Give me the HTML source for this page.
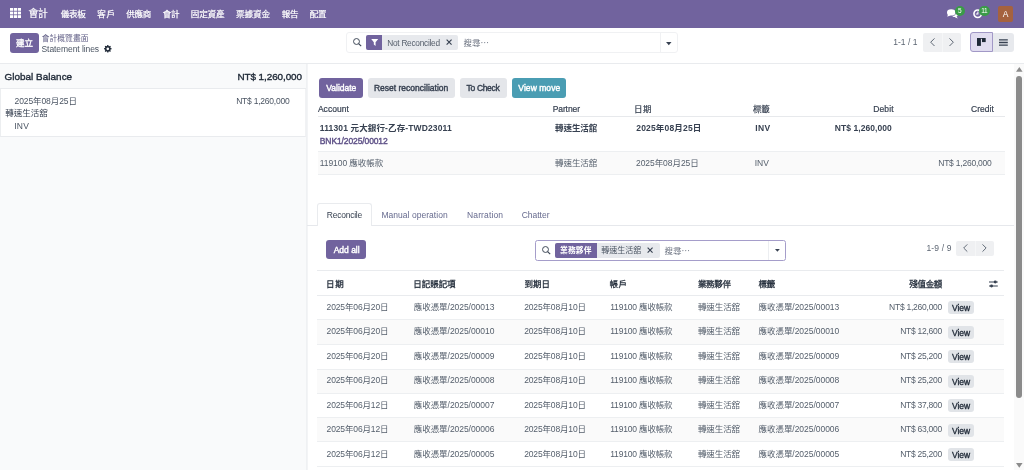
<!DOCTYPE html>
<html lang="zh-Hant">
<head>
<meta charset="utf-8">
<title>會計</title>
<style>
*{box-sizing:border-box;margin:0;padding:0}
html,body{width:1024px;height:470px;overflow:hidden;background:#fff}
body{font-family:"Liberation Sans","Noto Sans CJK TC",sans-serif;font-size:8.5px;color:#374151;position:relative}
.abs{position:absolute;white-space:nowrap}
.t{position:absolute;white-space:nowrap;line-height:12px}
.e{font-family:"Noto Sans CJK TC",sans-serif}
svg{position:absolute;overflow:visible}
#app{position:absolute;left:0;top:0;width:1024px;height:470px;overflow:hidden;will-change:transform}
</style>
</head>
<body>
<div id="app">
<div class="abs" style="left:0px;top:0px;width:1024px;height:27.5px;background:#71639e;"></div>
<svg style="left:10px;top:8px" width="11" height="10" viewBox="0 0 11 10"><g fill="#fff"><rect x="0" y="0" width="3.2" height="2.8"/><rect x="3.9" y="0" width="3.2" height="2.8"/><rect x="7.8" y="0" width="3.2" height="2.8"/><rect x="0" y="3.6" width="3.2" height="2.8"/><rect x="3.9" y="3.6" width="3.2" height="2.8"/><rect x="7.8" y="3.6" width="3.2" height="2.8"/><rect x="0" y="7.2" width="3.2" height="2.8"/><rect x="3.9" y="7.2" width="3.2" height="2.8"/><rect x="7.8" y="7.2" width="3.2" height="2.8"/></g></svg>
<div class="t" style="left:28.5px;top:8.4px;font-size:9.8px;color:#fff;letter-spacing:-0.25px;-webkit-text-stroke:0.2px #fff;">會計</div>
<div class="t" style="left:60.75px;top:8px;font-size:8.5px;color:#fff;letter-spacing:-0.25px;-webkit-text-stroke:0.22px #fff;">儀表板</div>
<div class="t" style="left:97.25px;top:8px;font-size:8.5px;color:#fff;letter-spacing:0.75px;-webkit-text-stroke:0.22px #fff;">客戶</div>
<div class="t" style="left:126.25px;top:8px;font-size:8.5px;color:#fff;letter-spacing:-0.25px;-webkit-text-stroke:0.22px #fff;">供應商</div>
<div class="t" style="left:162.75px;top:8px;font-size:8.5px;color:#fff;letter-spacing:-0.25px;-webkit-text-stroke:0.22px #fff;">會計</div>
<div class="t" style="left:190.75px;top:8px;font-size:8.5px;color:#fff;letter-spacing:-0.083px;-webkit-text-stroke:0.22px #fff;">固定資產</div>
<div class="t" style="left:236px;top:8px;font-size:8.5px;color:#fff;-webkit-text-stroke:0.22px #fff;">票據資金</div>
<div class="t" style="left:281.75px;top:8px;font-size:8.5px;color:#fff;letter-spacing:-0.25px;-webkit-text-stroke:0.22px #fff;">報告</div>
<div class="t" style="left:309.75px;top:8px;font-size:8.5px;color:#fff;letter-spacing:-0.25px;-webkit-text-stroke:0.22px #fff;">配置</div>
<svg style="left:947px;top:8.5px" width="11" height="10" viewBox="0 0 11 10"><g fill="#fff"><ellipse cx="4.2" cy="3.4" rx="4.2" ry="3.2"/><path d="M1 5 L0.3 7.8 L3.6 6.2 Z"/><path d="M5.2 7.4 C7.4 8.6 9.8 8 10.6 6.4 C11.2 5 10.6 3.8 9.2 3 C9.2 5.6 7.6 7 5.2 7.4 Z"/><path d="M9.4 7.2 L10.8 9.4 L7.8 8.2 Z"/></g></svg>
<div class="abs" style="left:954.6px;top:5.5px;width:10.2px;height:10.2px;border-radius:5.1px;background:#3a9b47;color:#fff;font-size:6.5px;line-height:10.6px;text-align:center">5</div>
<svg style="left:973px;top:8.6px" width="9.4" height="9.4" viewBox="0 0 10 10"><circle cx="5" cy="5" r="4" fill="none" stroke="#fff" stroke-width="1.7"/><path d="M5.2 2.6 V5.4 H3" fill="none" stroke="#fff" stroke-width="1.1"/></svg>
<div class="abs" style="left:978.8px;top:5.5px;width:11px;height:10.2px;border-radius:5.1px;background:#3a9b47;color:#fff;font-size:6.5px;line-height:10.6px;text-align:center;letter-spacing:-0.3px">11</div>
<div class="abs" style="left:998px;top:6px;width:15.2px;height:16px;border-radius:2px;background:#a5623f;color:#fff;font-size:8.5px;line-height:16.5px;text-align:center">A</div>
<div class="abs" style="left:0px;top:63px;width:1024px;height:1px;background:#e9ebee;"></div>
<div class="abs" style="left:9.5px;top:33px;width:29.8px;height:19.8px;background:#71639e;border-radius:3px;"></div>
<div class="t" style="left:15.9px;top:37.4px;font-size:8.5px;color:#fff;-webkit-text-stroke:0.35px #fff;">建立</div>
<div class="t" style="left:41.75px;top:32.6px;font-size:7.7px;color:#5f5d84;letter-spacing:0.1px;">會計概覽畫面</div>
<div class="t" style="left:41.5px;top:42.5px;font-size:8.5px;color:#4b5563;letter-spacing:-0.071px;">Statement lines</div>
<svg style="left:103.5px;top:44.6px" width="7.6" height="7.6" viewBox="0 0 16 16"><path fill="#1f2937" d="M16 9.2V6.8l-2.1-.4c-.1-.5-.3-.9-.6-1.4l1.2-1.8-1.7-1.7-1.8 1.2c-.4-.2-.9-.4-1.4-.6L9.2 0H6.8l-.4 2.1c-.5.1-.9.3-1.4.6L3.2 1.5 1.5 3.2l1.2 1.8c-.2.4-.4.9-.6 1.4L0 6.8v2.4l2.1.4c.1.5.3.9.6 1.4l-1.2 1.8 1.7 1.7 1.8-1.2c.4.2.9.4 1.4.6l.4 2.1h2.4l.4-2.1c.5-.1.9-.3 1.4-.6l1.8 1.2 1.7-1.7-1.2-1.8c.2-.4.4-.9.6-1.4L16 9.2zM8 10.8A2.8 2.8 0 1 1 8 5.2a2.8 2.8 0 0 1 0 5.6z"/></svg>
<div class="abs" style="left:346px;top:32px;width:331.6px;height:21.3px;border:1px solid #f0f1f3;border-radius:3px;background:#fff"></div>
<div class="abs" style="left:660px;top:33px;width:1px;height:19.5px;background:#f0f1f3;"></div>
<svg style="left:353px;top:38.3px" width="8.5" height="8.5" viewBox="0 0 8.5 8.5"><circle cx="3.5" cy="3.5" r="2.95" fill="none" stroke="#374151" stroke-width="0.95"/><path d="M5.6 5.6 L8.2 8.2" stroke="#374151" stroke-width="1.1"/></svg>
<div class="abs" style="left:366.3px;top:35.3px;width:91.5px;height:14.4px;background:#e7e9ed;border-radius:2px;"></div>
<div class="abs" style="left:366.3px;top:35.3px;width:16px;height:14.4px;background:#71639e;border-radius:2px 0 0 2px;"></div>
<svg style="left:370.6px;top:39px" width="7.4" height="7" viewBox="0 0 8 8"><path d="M0 0 H8 L5 3.6 V8 L3 6.4 V3.6 Z" fill="#fff"/></svg>
<div class="t" style="left:387.25px;top:36.6px;font-size:8.3px;color:#555e6b;letter-spacing:-0.269px;">Not Reconciled</div>
<svg style="left:446.3px;top:39.3px" width="6.2" height="6.2" viewBox="0 0 7 7"><path d="M0.7 0.7 L6.3 6.3 M6.3 0.7 L0.7 6.3" stroke="#374151" stroke-width="1.3"/></svg>
<div class="t" style="left:463.55px;top:36.4px;font-size:8.5px;color:#6b7280;">搜尋<span class="e">…</span></div>
<svg style="left:666px;top:41.7px" width="5.6" height="3.2" viewBox="0 0 6 3.5"><path d="M0 0 H6 L3 3.5 Z" fill="#374151"/></svg>
<div class="t" style="left:893.2px;top:36.4px;font-size:8.5px;color:#5d6673;letter-spacing:0.025px;">1-1 / 1</div>
<div class="abs" style="left:923px;top:32.8px;width:38px;height:18.8px;background:#eff0f2;border-radius:2px;"></div>
<div class="abs" style="left:941.7px;top:32.8px;width:0.6px;height:18.8px;background:#f5f6f7;"></div>
<svg style="left:929.5px;top:38px" width="5" height="8.4" viewBox="0 0 5 8.4"><path d="M4.5 0.4 L0.7 4.2 L4.5 8" fill="none" stroke="#4b5563" stroke-width="0.9"/></svg>
<svg style="left:949px;top:38px" width="5" height="8.4" viewBox="0 0 5 8.4"><path d="M0.5 0.4 L4.3 4.2 L0.5 8" fill="none" stroke="#4b5563" stroke-width="0.9"/></svg>
<div class="abs" style="left:992px;top:33px;width:22px;height:18.6px;background:#e7e9ed;border-radius:0 3px 3px 0;"></div>
<div class="abs" style="left:970.2px;top:32.2px;width:22.8px;height:20.2px;border-radius:3px 0 0 3px;background:#e1ddf0;border:1px solid #a198c6"></div>
<svg style="left:977.4px;top:38.3px" width="8.7" height="7.9" viewBox="0 0 8.7 7.9"><rect x="0" y="0" width="3.9" height="7.9" fill="#1f2937"/><rect x="3.9" y="0" width="1.1" height="0.8" fill="#1f2937"/><rect x="5" y="0" width="3.7" height="4.1" fill="#1f2937"/></svg>
<svg style="left:999.2px;top:39px" width="8.8" height="7" viewBox="0 0 9 7"><path d="M0 0.8 H9 M0 3.5 H9 M0 6.2 H9" stroke="#374151" stroke-width="1.4"/></svg>
<div class="abs" style="left:0px;top:64px;width:306px;height:406px;background:#f9fafb;"></div>
<div class="abs" style="left:306px;top:64px;width:1px;height:406px;background:#eff1f3;"></div>
<div class="abs" style="left:307px;top:64px;width:1px;height:406px;background:#f3f4f6;"></div>
<div class="abs" style="left:0px;top:88px;width:306px;height:1px;background:#e9ebee;"></div>
<div class="abs" style="left:0px;top:89px;width:305.6px;height:47.6px;background:#fff;border-bottom:1px solid #e9ebee;border-right:1px solid #f1f2f4;border-left:1px solid #eceef0;"></div>
<div class="t" style="left:4.45px;top:70.9px;font-size:9.9px;color:#1f2937;letter-spacing:0.054px;-webkit-text-stroke:0.38px #1f2937;">Global Balance</div>
<div class="t" style="left:237.5px;top:70.9px;font-size:9.9px;color:#1f2937;letter-spacing:-0.071px;-webkit-text-stroke:0.38px #1f2937;">NT$ 1,260,000</div>
<div class="t" style="left:14.5px;top:94.6px;font-size:8.5px;color:#4b5563;letter-spacing:-0.09px;">2025年08月25日</div>
<div class="t" style="left:236.15px;top:94.6px;font-size:8.5px;color:#4b5563;letter-spacing:-0.229px;">NT$ 1,260,000</div>
<div class="t" style="left:5.35px;top:107.4px;font-size:8.5px;color:#374151;letter-spacing:-0.025px;">轉速生活舘</div>
<div class="t" style="left:14.25px;top:119.6px;font-size:8.5px;color:#4b5563;letter-spacing:0.25px;">INV</div>
<div class="abs" style="left:319.4px;top:78px;width:43.3px;height:19.6px;background:#71639e;border-radius:3px;"></div>
<div class="t" style="left:326.25px;top:82.3px;font-size:8.5px;color:#fff;-webkit-text-stroke:0.4px #fff;">Validate</div>
<div class="abs" style="left:367.8px;top:78px;width:86.9px;height:19.6px;background:#e4e6ea;border-radius:3px;"></div>
<div class="t" style="left:373.9px;top:82.3px;font-size:8.5px;color:#374151;letter-spacing:0.011px;-webkit-text-stroke:0.4px #374151;">Reset reconciliation</div>
<div class="abs" style="left:460px;top:78px;width:46.5px;height:19.6px;background:#e4e6ea;border-radius:3px;"></div>
<div class="t" style="left:466.6px;top:82.3px;font-size:8.5px;color:#374151;letter-spacing:-0.336px;-webkit-text-stroke:0.4px #374151;">To Check</div>
<div class="abs" style="left:511.5px;top:78px;width:54.5px;height:19.6px;background:#4a9db3;border-radius:3px;"></div>
<div class="t" style="left:518.35px;top:82.3px;font-size:8.5px;color:#fff;letter-spacing:0.05px;-webkit-text-stroke:0.4px #fff;">View move</div>
<div class="t" style="left:317.9px;top:103px;font-size:8.5px;color:#374151;letter-spacing:0.042px;-webkit-text-stroke:0.2px #374151;">Account</div>
<div class="t" style="left:552.7px;top:103px;font-size:8.5px;color:#374151;letter-spacing:-0.1px;-webkit-text-stroke:0.2px #374151;">Partner</div>
<div class="t" style="left:633.95px;top:103px;font-size:8.5px;color:#374151;letter-spacing:0.55px;-webkit-text-stroke:0.2px #374151;">日期</div>
<div class="t" style="left:753.05px;top:103px;font-size:8.5px;color:#374151;letter-spacing:-0.2px;-webkit-text-stroke:0.2px #374151;">標籤</div>
<div class="t" style="left:873.2px;top:103px;font-size:8.5px;color:#374151;letter-spacing:0.125px;-webkit-text-stroke:0.2px #374151;">Debit</div>
<div class="t" style="left:970.95px;top:103px;font-size:8.5px;color:#374151;letter-spacing:0.06px;-webkit-text-stroke:0.2px #374151;">Credit</div>
<div class="abs" style="left:317.5px;top:116px;width:687px;height:1px;background:#e7e9ec;"></div>
<div class="t" style="left:319.8px;top:122.2px;font-size:8.5px;color:#374151;font-weight:bold;letter-spacing:0.134px;">111301 元大銀行-乙存-TWD23011</div>
<div class="t" style="left:319.8px;top:134.5px;font-size:8.5px;color:#5f5288;letter-spacing:-0.111px;-webkit-text-stroke:0.4px #5f5288;">BNK1/2025/00012</div>
<div class="t" style="left:554.95px;top:122.2px;font-size:8.5px;color:#374151;font-weight:bold;letter-spacing:-0.025px;">轉速生活舘</div>
<div class="t" style="left:636.25px;top:122.2px;font-size:8.5px;color:#374151;font-weight:bold;letter-spacing:0.175px;">2025年08月25日</div>
<div class="t" style="left:755.3px;top:122.2px;font-size:8.5px;color:#374151;font-weight:bold;letter-spacing:0.35px;">INV</div>
<div class="t" style="left:834.8px;top:122.2px;font-size:8.5px;color:#374151;font-weight:bold;letter-spacing:0.058px;">NT$ 1,260,000</div>
<div class="abs" style="left:317.5px;top:151px;width:687px;height:1px;background:#edeff1;"></div>
<div class="abs" style="left:317.5px;top:152px;width:687px;height:22px;background:#fafafa;"></div>
<div class="t" style="left:319.8px;top:157px;font-size:8.5px;color:#56606d;letter-spacing:-0.075px;">119100 應收帳款</div>
<div class="t" style="left:554.95px;top:157px;font-size:8.5px;color:#56606d;letter-spacing:-0.025px;">轉速生活舘</div>
<div class="t" style="left:636px;top:157px;font-size:8.5px;color:#56606d;letter-spacing:-0.06px;">2025年08月25日</div>
<div class="t" style="left:754.75px;top:157px;font-size:8.5px;color:#56606d;letter-spacing:-0.025px;">INV</div>
<div class="t" style="left:938.25px;top:157px;font-size:8.5px;color:#56606d;letter-spacing:-0.229px;">NT$ 1,260,000</div>
<div class="abs" style="left:317.5px;top:174px;width:687px;height:1px;background:#edeff1;"></div>
<div class="abs" style="left:307px;top:225px;width:707px;height:1px;background:#e6e8ec;"></div>
<div class="abs" style="left:317.2px;top:202.5px;width:55.3px;height:23.5px;border:1px solid #e9ebee;border-bottom:none;border-radius:3px 3px 0 0;background:#fff"></div>
<div class="t" style="left:326.75px;top:208.7px;font-size:8.5px;color:#374151;letter-spacing:-0.231px;">Reconcile</div>
<div class="t" style="left:381.45px;top:208.7px;font-size:8.5px;color:#666a8e;letter-spacing:0.033px;">Manual operation</div>
<div class="t" style="left:467.05px;top:208.7px;font-size:8.5px;color:#666a8e;letter-spacing:0.119px;">Narration</div>
<div class="t" style="left:521.7px;top:208.7px;font-size:8.5px;color:#666a8e;letter-spacing:-0.008px;">Chatter</div>
<div class="abs" style="left:326.2px;top:240px;width:40px;height:19.4px;background:#71639e;border-radius:3px;"></div>
<div class="t" style="left:333.65px;top:244.2px;font-size:8.5px;color:#fff;-webkit-text-stroke:0.4px #fff;">Add all</div>
<div class="abs" style="left:535px;top:240.3px;width:251px;height:20.3px;border:1px solid #a59dca;border-radius:2.5px;background:#fff"></div>
<div class="abs" style="left:768.4px;top:241.3px;width:1px;height:18.3px;background:#eceef1;"></div>
<svg style="left:541.7px;top:246.1px" width="8.5" height="8.5" viewBox="0 0 8.5 8.5"><circle cx="3.5" cy="3.5" r="2.95" fill="none" stroke="#374151" stroke-width="0.95"/><path d="M5.6 5.6 L8.2 8.2" stroke="#374151" stroke-width="1.1"/></svg>
<div class="abs" style="left:554.7px;top:243.2px;width:105px;height:14.6px;background:#e7e9ed;border-radius:2px;"></div>
<div class="abs" style="left:554.7px;top:243.2px;width:42.2px;height:14.6px;background:#71639e;border-radius:2px 0 0 2px;"></div>
<div class="t" style="left:560.1px;top:244.6px;font-size:7.8px;color:#fff;font-weight:bold;letter-spacing:0.05px;">業務夥伴</div>
<div class="t" style="left:601.35px;top:244.8px;font-size:8px;color:#4b5563;letter-spacing:-0.025px;">轉速生活舘</div>
<svg style="left:647.2px;top:247.2px" width="6.2" height="6.2" viewBox="0 0 7 7"><path d="M0.7 0.7 L6.3 6.3 M6.3 0.7 L0.7 6.3" stroke="#374151" stroke-width="1.3"/></svg>
<div class="t" style="left:664.45px;top:244.3px;font-size:8.5px;color:#6b7280;">搜尋<span class="e">…</span></div>
<svg style="left:774.8px;top:249.4px" width="4.8" height="2.9" viewBox="0 0 6 3.5"><path d="M0 0 H6 L3 3.5 Z" fill="#374151"/></svg>
<div class="t" style="left:926.4px;top:242.1px;font-size:8.5px;color:#5d6673;letter-spacing:0.175px;">1-9 / 9</div>
<div class="abs" style="left:956px;top:240.6px;width:38.2px;height:15px;background:#eff0f2;border-radius:2px;"></div>
<div class="abs" style="left:974.8px;top:240.6px;width:0.6px;height:15px;background:#f5f6f7;"></div>
<svg style="left:963.2px;top:244px" width="4.8" height="8" viewBox="0 0 5 8.4"><path d="M4.5 0.4 L0.7 4.2 L4.5 8" fill="none" stroke="#4b5563" stroke-width="0.9"/></svg>
<svg style="left:982.3px;top:244px" width="4.8" height="8" viewBox="0 0 5 8.4"><path d="M0.5 0.4 L4.3 4.2 L0.5 8" fill="none" stroke="#4b5563" stroke-width="0.9"/></svg>
<div class="abs" style="left:317px;top:270px;width:687px;height:1px;background:#e9ebee;"></div>
<div class="abs" style="left:317px;top:295px;width:687px;height:1px;background:#e9ebee;"></div>
<div class="t" style="left:326.05px;top:277.6px;font-size:8.5px;color:#1f2937;letter-spacing:0.75px;-webkit-text-stroke:0.28px #1f2937;">日期</div>
<div class="t" style="left:413.35px;top:277.6px;font-size:8.5px;color:#1f2937;letter-spacing:-0.062px;-webkit-text-stroke:0.28px #1f2937;">日記賬記項</div>
<div class="t" style="left:524.45px;top:277.6px;font-size:8.5px;color:#1f2937;letter-spacing:0.05px;-webkit-text-stroke:0.28px #1f2937;">到期日</div>
<div class="t" style="left:609.6px;top:277.6px;font-size:8.5px;color:#1f2937;letter-spacing:0.35px;-webkit-text-stroke:0.28px #1f2937;">帳戶</div>
<div class="t" style="left:697.95px;top:277.6px;font-size:8.5px;color:#1f2937;letter-spacing:-0.317px;-webkit-text-stroke:0.28px #1f2937;">業務夥伴</div>
<div class="t" style="left:758.5px;top:277.6px;font-size:8.5px;color:#1f2937;letter-spacing:-0.25px;-webkit-text-stroke:0.28px #1f2937;">標籤</div>
<div class="t" style="left:909.3px;top:277.6px;font-size:8.5px;color:#1f2937;letter-spacing:-0.317px;-webkit-text-stroke:0.28px #1f2937;">殘值金額</div>
<svg style="left:989.3px;top:280px" width="8.8" height="8" viewBox="0 0 9 8"><path d="M0 2 H9 M0 6 H9" stroke="#374151" stroke-width="1.1"/><circle cx="6.4" cy="2" r="1.5" fill="#374151"/><circle cx="2.6" cy="6" r="1.5" fill="#374151"/></svg>
<div class="abs" style="left:317px;top:319px;width:687px;height:1px;background:#edeff1;"></div>
<div class="t" style="left:326.6px;top:300.9px;font-size:8.5px;color:#56606d;letter-spacing:-0.14px;">2025年06月20日</div>
<div class="t" style="left:413.75px;top:300.9px;font-size:8.5px;color:#56606d;letter-spacing:-0.046px;">應收憑單/2025/00013</div>
<div class="t" style="left:524.2px;top:300.9px;font-size:8.5px;color:#56606d;letter-spacing:-0.15px;">2025年08月10日</div>
<div class="t" style="left:610.2px;top:300.9px;font-size:8.5px;color:#56606d;letter-spacing:-0.175px;">119100 應收帳款</div>
<div class="t" style="left:697.95px;top:300.9px;font-size:8.5px;color:#56606d;letter-spacing:-0.1px;">轉速生活舘</div>
<div class="t" style="left:758.5px;top:300.9px;font-size:8.5px;color:#56606d;letter-spacing:-0.036px;">應收憑單/2025/00013</div>
<div class="t" style="left:889.05px;top:300.9px;font-size:8.5px;color:#56606d;letter-spacing:-0.246px;">NT$ 1,260,000</div>
<div class="abs" style="left:948.4px;top:301px;width:25.4px;height:13px;background:#e1e4e8;border-radius:3px;"></div>
<div class="t" style="left:952.05px;top:301.9px;font-size:8.5px;color:#1f2937;letter-spacing:-0.1px;-webkit-text-stroke:0.32px #1f2937;">View</div>
<div class="abs" style="left:317px;top:320px;width:687px;height:24px;background:#fafafa;"></div>
<div class="abs" style="left:317px;top:344px;width:687px;height:1px;background:#edeff1;"></div>
<div class="t" style="left:326.6px;top:325.3px;font-size:8.5px;color:#56606d;letter-spacing:-0.14px;">2025年06月20日</div>
<div class="t" style="left:413.75px;top:325.3px;font-size:8.5px;color:#56606d;letter-spacing:-0.046px;">應收憑單/2025/00010</div>
<div class="t" style="left:524.2px;top:325.3px;font-size:8.5px;color:#56606d;letter-spacing:-0.15px;">2025年08月10日</div>
<div class="t" style="left:610.2px;top:325.3px;font-size:8.5px;color:#56606d;letter-spacing:-0.175px;">119100 應收帳款</div>
<div class="t" style="left:697.95px;top:325.3px;font-size:8.5px;color:#56606d;letter-spacing:-0.1px;">轉速生活舘</div>
<div class="t" style="left:758.5px;top:325.3px;font-size:8.5px;color:#56606d;letter-spacing:-0.036px;">應收憑單/2025/00010</div>
<div class="t" style="left:900.25px;top:325.3px;font-size:8.5px;color:#56606d;letter-spacing:-0.267px;">NT$ 12,600</div>
<div class="abs" style="left:948.4px;top:326px;width:25.4px;height:13px;background:#e1e4e8;border-radius:3px;"></div>
<div class="t" style="left:952.05px;top:326.9px;font-size:8.5px;color:#1f2937;letter-spacing:-0.1px;-webkit-text-stroke:0.32px #1f2937;">View</div>
<div class="abs" style="left:317px;top:369px;width:687px;height:1px;background:#edeff1;"></div>
<div class="t" style="left:326.6px;top:349.8px;font-size:8.5px;color:#56606d;letter-spacing:-0.14px;">2025年06月20日</div>
<div class="t" style="left:413.75px;top:349.8px;font-size:8.5px;color:#56606d;letter-spacing:-0.046px;">應收憑單/2025/00009</div>
<div class="t" style="left:524.2px;top:349.8px;font-size:8.5px;color:#56606d;letter-spacing:-0.15px;">2025年08月10日</div>
<div class="t" style="left:610.2px;top:349.8px;font-size:8.5px;color:#56606d;letter-spacing:-0.175px;">119100 應收帳款</div>
<div class="t" style="left:697.95px;top:349.8px;font-size:8.5px;color:#56606d;letter-spacing:-0.1px;">轉速生活舘</div>
<div class="t" style="left:758.5px;top:349.8px;font-size:8.5px;color:#56606d;letter-spacing:-0.036px;">應收憑單/2025/00009</div>
<div class="t" style="left:900.25px;top:349.8px;font-size:8.5px;color:#56606d;letter-spacing:-0.267px;">NT$ 25,200</div>
<div class="abs" style="left:948.4px;top:350px;width:25.4px;height:13px;background:#e1e4e8;border-radius:3px;"></div>
<div class="t" style="left:952.05px;top:350.9px;font-size:8.5px;color:#1f2937;letter-spacing:-0.1px;-webkit-text-stroke:0.32px #1f2937;">View</div>
<div class="abs" style="left:317px;top:370px;width:687px;height:23px;background:#fafafa;"></div>
<div class="abs" style="left:317px;top:393px;width:687px;height:1px;background:#edeff1;"></div>
<div class="t" style="left:326.6px;top:374.2px;font-size:8.5px;color:#56606d;letter-spacing:-0.14px;">2025年06月20日</div>
<div class="t" style="left:413.75px;top:374.2px;font-size:8.5px;color:#56606d;letter-spacing:-0.046px;">應收憑單/2025/00008</div>
<div class="t" style="left:524.2px;top:374.2px;font-size:8.5px;color:#56606d;letter-spacing:-0.15px;">2025年08月10日</div>
<div class="t" style="left:610.2px;top:374.2px;font-size:8.5px;color:#56606d;letter-spacing:-0.175px;">119100 應收帳款</div>
<div class="t" style="left:697.95px;top:374.2px;font-size:8.5px;color:#56606d;letter-spacing:-0.1px;">轉速生活舘</div>
<div class="t" style="left:758.5px;top:374.2px;font-size:8.5px;color:#56606d;letter-spacing:-0.036px;">應收憑單/2025/00008</div>
<div class="t" style="left:900.25px;top:374.2px;font-size:8.5px;color:#56606d;letter-spacing:-0.267px;">NT$ 25,200</div>
<div class="abs" style="left:948.4px;top:375px;width:25.4px;height:13px;background:#e1e4e8;border-radius:3px;"></div>
<div class="t" style="left:952.05px;top:375.9px;font-size:8.5px;color:#1f2937;letter-spacing:-0.1px;-webkit-text-stroke:0.32px #1f2937;">View</div>
<div class="abs" style="left:317px;top:417px;width:687px;height:1px;background:#edeff1;"></div>
<div class="t" style="left:326.6px;top:398.7px;font-size:8.5px;color:#56606d;letter-spacing:-0.14px;">2025年06月12日</div>
<div class="t" style="left:413.75px;top:398.7px;font-size:8.5px;color:#56606d;letter-spacing:-0.046px;">應收憑單/2025/00007</div>
<div class="t" style="left:524.2px;top:398.7px;font-size:8.5px;color:#56606d;letter-spacing:-0.15px;">2025年08月10日</div>
<div class="t" style="left:610.2px;top:398.7px;font-size:8.5px;color:#56606d;letter-spacing:-0.175px;">119100 應收帳款</div>
<div class="t" style="left:697.95px;top:398.7px;font-size:8.5px;color:#56606d;letter-spacing:-0.1px;">轉速生活舘</div>
<div class="t" style="left:758.5px;top:398.7px;font-size:8.5px;color:#56606d;letter-spacing:-0.036px;">應收憑單/2025/00007</div>
<div class="t" style="left:900.25px;top:398.7px;font-size:8.5px;color:#56606d;letter-spacing:-0.267px;">NT$ 37,800</div>
<div class="abs" style="left:948.4px;top:399px;width:25.4px;height:13px;background:#e1e4e8;border-radius:3px;"></div>
<div class="t" style="left:952.05px;top:399.9px;font-size:8.5px;color:#1f2937;letter-spacing:-0.1px;-webkit-text-stroke:0.32px #1f2937;">View</div>
<div class="abs" style="left:317px;top:418px;width:687px;height:23px;background:#fafafa;"></div>
<div class="abs" style="left:317px;top:441px;width:687px;height:1px;background:#edeff1;"></div>
<div class="t" style="left:326.6px;top:423.1px;font-size:8.5px;color:#56606d;letter-spacing:-0.14px;">2025年06月12日</div>
<div class="t" style="left:413.75px;top:423.1px;font-size:8.5px;color:#56606d;letter-spacing:-0.046px;">應收憑單/2025/00006</div>
<div class="t" style="left:524.2px;top:423.1px;font-size:8.5px;color:#56606d;letter-spacing:-0.15px;">2025年08月10日</div>
<div class="t" style="left:610.2px;top:423.1px;font-size:8.5px;color:#56606d;letter-spacing:-0.175px;">119100 應收帳款</div>
<div class="t" style="left:697.95px;top:423.1px;font-size:8.5px;color:#56606d;letter-spacing:-0.1px;">轉速生活舘</div>
<div class="t" style="left:758.5px;top:423.1px;font-size:8.5px;color:#56606d;letter-spacing:-0.036px;">應收憑單/2025/00006</div>
<div class="t" style="left:900.25px;top:423.1px;font-size:8.5px;color:#56606d;letter-spacing:-0.267px;">NT$ 63,000</div>
<div class="abs" style="left:948.4px;top:424px;width:25.4px;height:13px;background:#e1e4e8;border-radius:3px;"></div>
<div class="t" style="left:952.05px;top:424.9px;font-size:8.5px;color:#1f2937;letter-spacing:-0.1px;-webkit-text-stroke:0.32px #1f2937;">View</div>
<div class="abs" style="left:317px;top:466px;width:687px;height:1px;background:#edeff1;"></div>
<div class="t" style="left:326.6px;top:447.6px;font-size:8.5px;color:#56606d;letter-spacing:-0.14px;">2025年06月12日</div>
<div class="t" style="left:413.75px;top:447.6px;font-size:8.5px;color:#56606d;letter-spacing:-0.046px;">應收憑單/2025/00005</div>
<div class="t" style="left:524.2px;top:447.6px;font-size:8.5px;color:#56606d;letter-spacing:-0.15px;">2025年08月10日</div>
<div class="t" style="left:610.2px;top:447.6px;font-size:8.5px;color:#56606d;letter-spacing:-0.175px;">119100 應收帳款</div>
<div class="t" style="left:697.95px;top:447.6px;font-size:8.5px;color:#56606d;letter-spacing:-0.1px;">轉速生活舘</div>
<div class="t" style="left:758.5px;top:447.6px;font-size:8.5px;color:#56606d;letter-spacing:-0.036px;">應收憑單/2025/00005</div>
<div class="t" style="left:900.25px;top:447.6px;font-size:8.5px;color:#56606d;letter-spacing:-0.267px;">NT$ 25,200</div>
<div class="abs" style="left:948.4px;top:448px;width:25.4px;height:13px;background:#e1e4e8;border-radius:3px;"></div>
<div class="t" style="left:952.05px;top:448.9px;font-size:8.5px;color:#1f2937;letter-spacing:-0.1px;-webkit-text-stroke:0.32px #1f2937;">View</div>
<div class="abs" style="left:1014px;top:64px;width:10px;height:406px;background:#fafafa;"></div>
<svg style="left:1015.7px;top:67px" width="6.6" height="4.7" viewBox="0 0 6.6 4.7"><path d="M0 4.7 L3.3 0 L6.6 4.7 Z" fill="#8b8b8b"/></svg>
<div class="abs" style="left:1016px;top:75.5px;width:6.1px;height:322.7px;background:#8b8b8b;border-radius:3px;"></div>
<svg style="left:1015.7px;top:462.8px" width="6.6" height="4.7" viewBox="0 0 6.6 4.7"><path d="M0 0 L3.3 4.7 L6.6 0 Z" fill="#8b8b8b"/></svg>
</div>
</body>
</html>
